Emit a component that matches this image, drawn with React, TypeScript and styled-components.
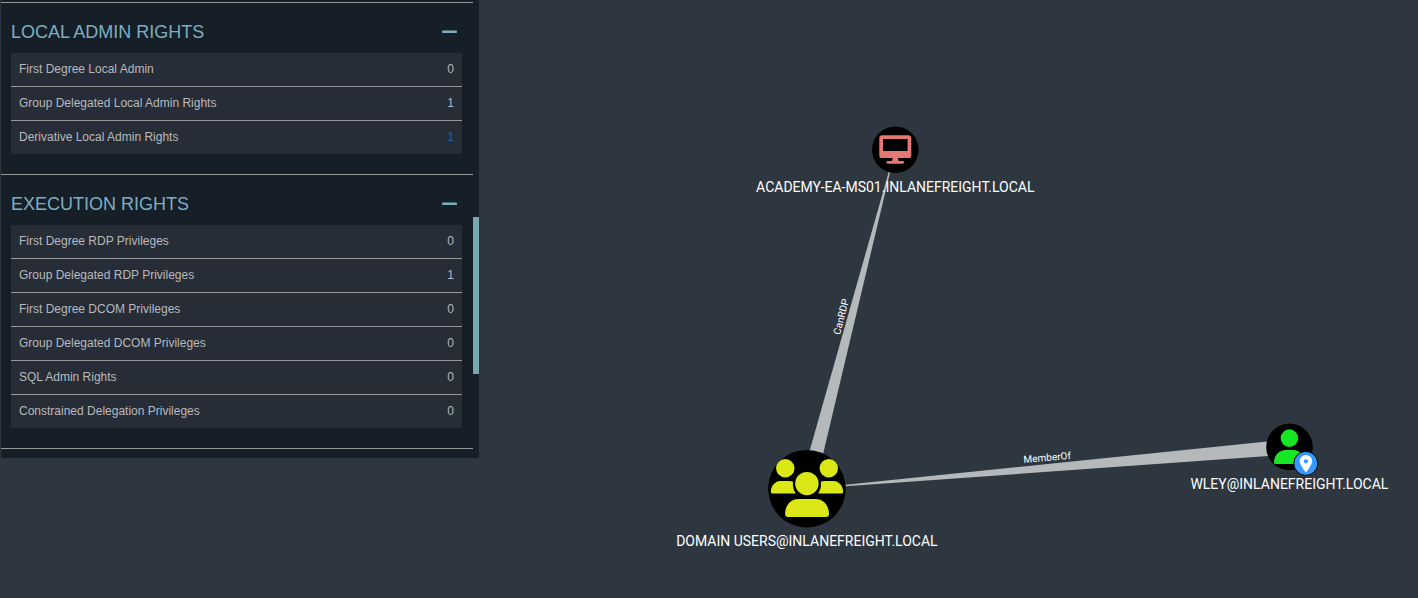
import React from 'react';
import styled, { createGlobalStyle } from 'styled-components';

const GlobalStyle = createGlobalStyle`
  *, *::before, *::after { box-sizing: border-box; }
  body {
    margin: 0;
    background: #2e373f;
    font-family: "Liberation Sans", Arial, sans-serif;
    font-size: 12px;
  }
`;

const Page = styled.div`
  display: flex;
  align-items: flex-start;
  min-height: 100vh;
  overflow: hidden;
`;

const Panel = styled.aside`
  display: flex;
  flex: 0 0 478px;
  margin-left: 1px;
  background: #161e28;
`;

const Sections = styled.div`
  flex: 1;
  padding: 2px 0 9px;
`;

const Section = styled.section`
  padding: 0 11px 20px 10px;
  border-top: 1px solid #95999b;

  &:last-child {
    border-bottom: 1px solid #95999b;
  }
`;

const SectionHeader = styled.header`
  display: flex;
  align-items: center;
  justify-content: space-between;
  height: 50px;
  padding: 8px 5px 0 0;
`;

const SectionTitle = styled.h2`
  margin: 0;
  color: #7cafc2;
  font-size: 18px;
  font-weight: 400;
  line-height: 20px;
`;

const CollapseButton = styled.button`
  display: flex;
  padding: 0;
  border: 0;
  background: none;
  color: #7cafc2;
  cursor: pointer;
`;

const Table = styled.table`
  width: 100%;
  border-spacing: 0;
  background: #262d37;
  color: #b8babd;
  line-height: 16px;
`;

const Row = styled.tr`
  & > * {
    padding: 8px 8px 9px;
    font-weight: 400;
    text-align: left;
  }

  & + & > * {
    border-top: 1px solid #95999b;
  }
`;

const Value = styled.td<{ $accent?: boolean }>`
  && {
    color: ${(p) => (p.$accent ? '#24639c' : 'inherit')};
    text-align: right;
  }
`;

const ScrollTrack = styled.div`
  flex: 0 0 6px;
  padding-top: 217px;
`;

const ScrollThumb = styled.div`
  height: 157px;
  background: #76a9b0;
`;

const Graph = styled.svg`
  display: block;
  flex: 1;
  min-width: 0;
  height: 100vh;
`;

const NodeLabel = styled.text`
  fill: #fff;
  font-family: Roboto, sans-serif;
  font-size: 14px;
  text-anchor: middle;
`;

const EdgeLabel = styled.text`
  fill: #fff;
  font-family: Roboto, sans-serif;
  font-size: 10px;
  text-anchor: middle;
`;

type Stat = { label: string; value: number; accent?: boolean };

const sections: { title: string; rows: Stat[] }[] = [
  {
    title: 'LOCAL ADMIN RIGHTS',
    rows: [
      { label: 'First Degree Local Admin', value: 0 },
      { label: 'Group Delegated Local Admin Rights', value: 1 },
      { label: 'Derivative Local Admin Rights', value: 1, accent: true },
    ],
  },
  {
    title: 'EXECUTION RIGHTS',
    rows: [
      { label: 'First Degree RDP Privileges', value: 0 },
      { label: 'Group Delegated RDP Privileges', value: 1 },
      { label: 'First Degree DCOM Privileges', value: 0 },
      { label: 'Group Delegated DCOM Privileges', value: 0 },
      { label: 'SQL Admin Rights', value: 0 },
      { label: 'Constrained Delegation Privileges', value: 0 },
    ],
  },
];

function StatSection({ title, rows }: { title: string; rows: Stat[] }) {
  return (
    <Section>
      <SectionHeader>
        <SectionTitle>{title}</SectionTitle>
        <CollapseButton type="button" aria-label={`Collapse ${title}`}>
          <svg width="15" height="4" viewBox="0 0 15 4" aria-hidden="true">
            <rect y="0.4" width="15" height="2.6" rx="0.8" fill="currentColor" />
          </svg>
        </CollapseButton>
      </SectionHeader>
      <Table aria-label={title}>
        <tbody>
          {rows.map((row) => (
            <Row key={row.label}>
              <th scope="row">{row.label}</th>
              <Value $accent={row.accent}>{row.value}</Value>
            </Row>
          ))}
        </tbody>
      </Table>
    </Section>
  );
}

function ComputerNode() {
  return (
    <g>
      <circle cx="895.3" cy="149.8" r="23.3" />
      <g fill="#e67873">
        <path
          fillRule="evenodd"
          d="M882.2 135.3h26.2a2.9 2.9 0 0 1 2.9 2.9v17a2.9 2.9 0 0 1-2.9 2.9h-26.2a2.9 2.9 0 0 1-2.9-2.9v-17a2.9 2.9 0 0 1 2.9-2.9zM883 139v12.1h24.6V139z"
        />
        <path d="M892.7 158h5.2l.7 3h4.2a1.3 1.3 0 0 1 0 2.7h-15a1.3 1.3 0 0 1 0-2.7h4.2z" />
      </g>
      <NodeLabel x="895.3" y="192">ACADEMY-EA-MS01.INLANEFREIGHT.LOCAL</NodeLabel>
    </g>
  );
}

function GroupNode() {
  return (
    <g>
      <circle cx="806.9" cy="488.7" r="38.8" />
      <g fill="#dbe716">
        <circle cx="785.3" cy="468.2" r="9.2" />
        <circle cx="828.8" cy="468.2" r="9.2" />
        <path d="M780.5 480.9h8.7c1.4 0 2.7.3 3.9.8a13.9 13.9 0 0 0-.1 4.2c.3 2.7 1.3 5.2 2.8 7.5h-23.6a1.4 1.4 0 0 1-1.4-1.4c0-6.2 4.3-11.1 9.7-11.1z" />
        <path d="M833.5 480.9h-8.7c-1.4 0-2.8.3-4 .8a13.9 13.9 0 0 1 .1 4.2c-.3 2.7-1.3 5.2-2.8 7.5h23.7a1.4 1.4 0 0 0 1.4-1.4c0-6.2-4.3-11.1-9.7-11.1z" />
        <circle cx="806.9" cy="483.6" r="11.7" />
        <path d="M798.4 499.1h17.2c7.6 0 13.4 6.3 13.4 14.9a3 3 0 0 1-3 3h-37.9a3 3 0 0 1-3-3c0-8.6 5.8-14.9 13.3-14.9z" />
      </g>
      <NodeLabel x="806.9" y="546">DOMAIN USERS@INLANEFREIGHT.LOCAL</NodeLabel>
    </g>
  );
}

function UserNode() {
  return (
    <g>
      <circle cx="1289.5" cy="446.9" r="23.3" />
      <g fill="#17e625">
        <circle cx="1289.4" cy="438.1" r="8.8" />
        <path d="M1286 450h7c6.6 0 11.7 5.4 11.7 12.4a1.7 1.7 0 0 1-1.7 1.7h-27.3a1.700 1.700 0 0 1-1.7-1.7c0-7 5.2-12.4 12-12.4z" />
      </g>
      <circle cx="1305.8" cy="463.4" r="12" fill="#3399ff" stroke="#000" />
      <path
        fill="#fff"
        fillRule="evenodd"
        d="M1305.9 455a6.200 6.200 0 0 0-6.200 6.200c0 3.100 4 8.300 5.700 10.600a.7.7 0 0 0 1.100 0c1.700-2.300 5.600-7.500 5.600-10.600a6.200 6.200 0 0 0-6.200-6.200zm0 4.200a2.100 2.100 0 1 1 0 4.200 2.100 2.100 0 0 1 0-4.200z"
      />
      <NodeLabel x="1289.4" y="489">WLEY@INLANEFREIGHT.LOCAL</NodeLabel>
    </g>
  );
}

export default function App() {
  return (
    <>
      <GlobalStyle />
      <Page>
        <Panel>
          <Sections>
            {sections.map((section) => (
              <StatSection key={section.title} {...section} />
            ))}
          </Sections>
          <ScrollTrack>
            <ScrollThumb />
          </ScrollTrack>
        </Panel>
        <Graph viewBox="479 0 939 598" role="img" aria-label="Domain relationship graph">
          <g fill="#b5b9bc">
            <polygon points="799.4,486.7 888.7,172 890,172.4 814.4,490.6" />
            <polygon points="1288.7,439.4 845.4,484.8 845.6,486.200 1290,454.5" />
          </g>
          <EdgeLabel transform="translate(844.5 317.5) rotate(-75.5)">CanRDP</EdgeLabel>
          <EdgeLabel transform="translate(1047.5 461) rotate(-5)">MemberOf</EdgeLabel>
          <ComputerNode />
          <GroupNode />
          <UserNode />
        </Graph>
      </Page>
    </>
  );
}
